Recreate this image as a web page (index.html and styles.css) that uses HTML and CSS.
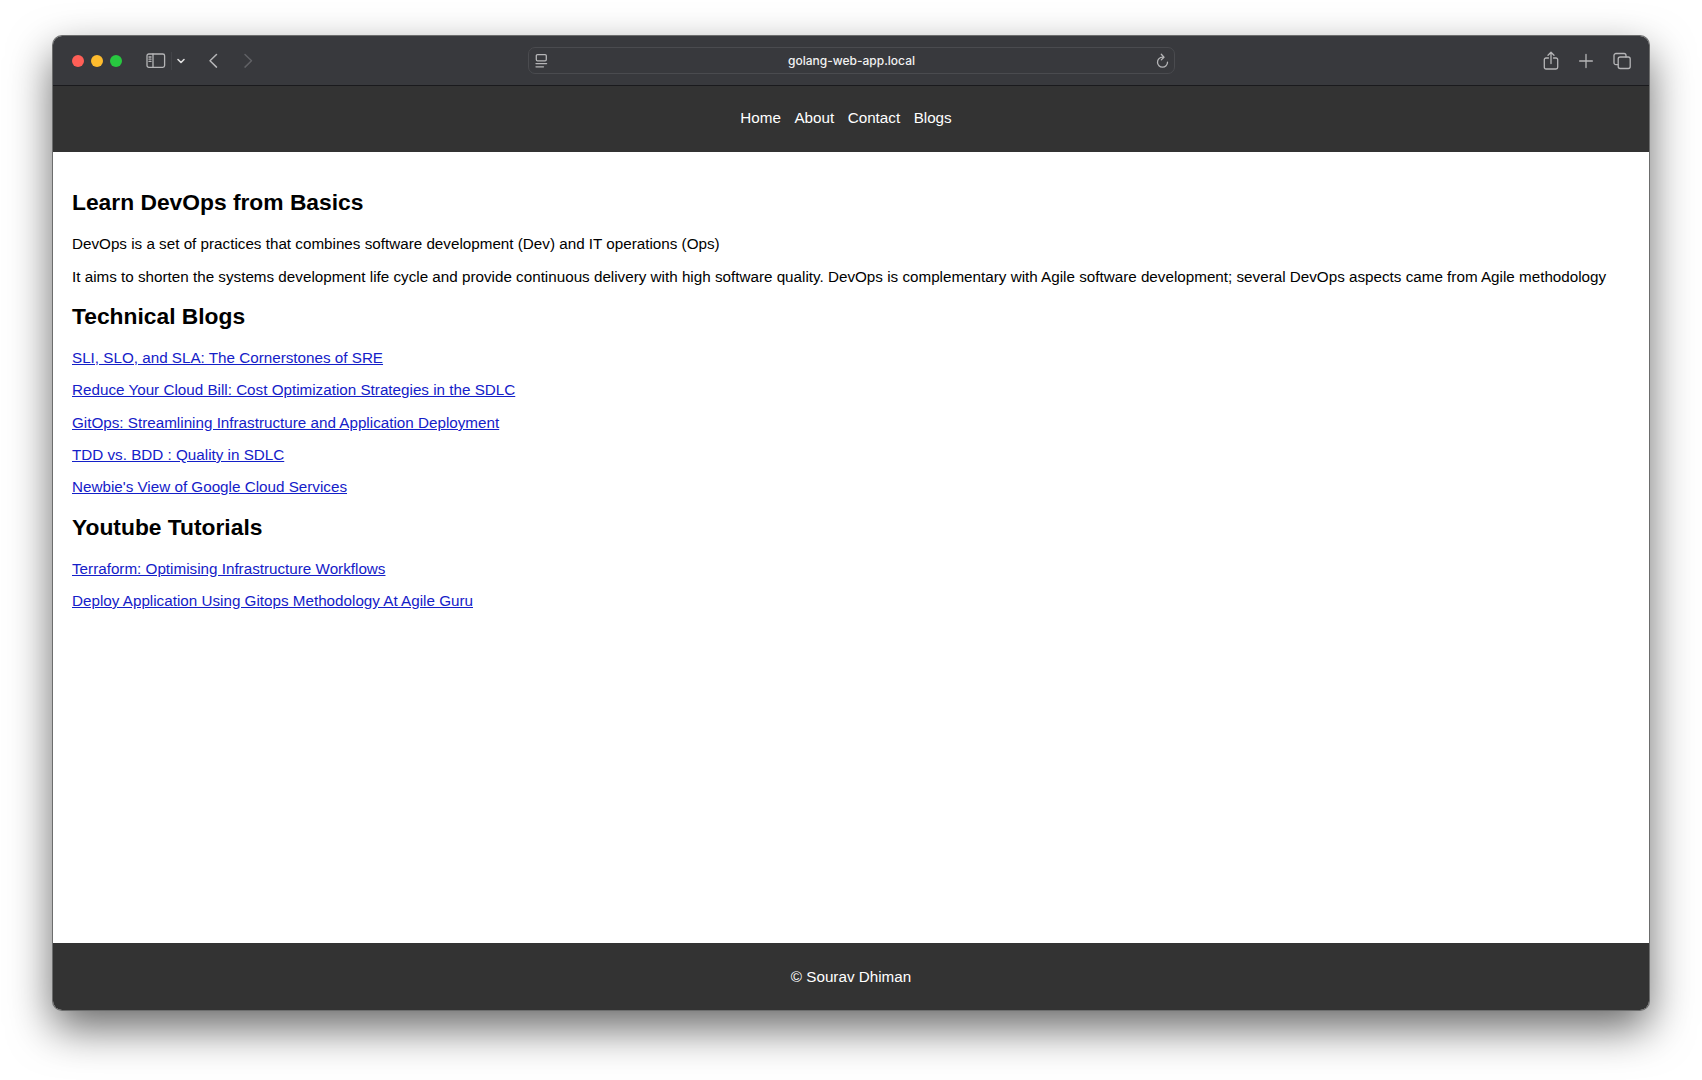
FILE: index.html
```html
<!DOCTYPE html>
<html lang="en">

<head>
    <meta charset="UTF-8">
    <meta name="viewport" content="width=device-width, initial-scale=1.0">
    <title>Learn DevOps from Basics</title>
    <link rel="stylesheet" href="styles.css">
</head>

<body>

    <div class="window">

        <div class="toolbar">
            <div class="tools-left">
                <span class="dot red"></span>
                <span class="dot yellow"></span>
                <span class="dot green"></span>
                <svg class="sidebar-icon" width="20" height="16" viewBox="0 0 20 16">
                    <rect x="1" y="1" width="17.6" height="13.4" rx="1.8" />
                    <path d="M7 1v13.4M3 4h2M3 6.2h2M3 8.4h2" />
                </svg>
                <span class="split"></span>
                <svg class="down-icon" width="10" height="8" viewBox="0 0 10 8">
                    <path d="M2 2.5l3 3 3-3" />
                </svg>
                <svg class="back-icon" width="10" height="16" viewBox="0 0 10 16">
                    <path d="M8.500 1.500L2 7.800l6.500 6.300" />
                </svg>
                <svg class="forward-icon" width="10" height="16" viewBox="0 0 10 16">
                    <path d="M2 1.500l6.500 6.300L2 14.100" />
                </svg>
            </div>

            <div class="address">
                <svg width="14" height="16" viewBox="0 0 14 16">
                    <rect x="1.300" y="1.600" width="10" height="6.200" rx="1.200" />
                    <path d="M1 10.600h10.600M1 13.800h7.500" />
                </svg>
                <span class="url">golang-web-app.local</span>
                <svg class="reload-icon" width="14" height="16" viewBox="0 0 14 16">
                    <path d="M8.500 4.200H7.500A5 5 0 1 0 12.500 9.200M6.300 1.300l2.700 2.900-2.700 2.700" />
                </svg>
            </div>

            <div class="tools-right">
                <svg width="16" height="20" viewBox="0 0 16 20">
                    <path d="M5.500 7H3a1.700 1.700 0 0 0-1.700 1.700v7.600A1.700 1.700 0 0 0 3 18h10a1.700 1.700 0 0 0 1.700-1.700V8.700A1.700 1.700 0 0 0 13 7h-2.500M8 12.500V1.500M5 4.300l3-3 3 3" />
                </svg>
                <svg class="plus-icon" width="14" height="20" viewBox="0 0 14 20">
                    <path d="M7 3.500v13M.6 10h12.800" />
                </svg>
                <svg width="18" height="20" viewBox="0 0 18 20">
                    <rect x="5.200" y="6" width="12" height="11.500" rx="2" />
                    <path d="M5 13.700H3a2 2 0 0 1-2-2V4.500a2 2 0 0 1 2-2h8a2 2 0 0 1 2 2V6" />
                </svg>
            </div>
        </div>

        <header class="header">
            <nav class="nav">
                <a href="#">Home</a>
                <a href="#">About</a>
                <a href="#">Contact</a>
                <a href="#">Blogs</a>
            </nav>
        </header>

        <main class="content">
            <h2>Learn DevOps from Basics</h2>
            <p>DevOps is a set of practices that combines software development (Dev) and IT operations (Ops)</p>
            <p>It aims to shorten the systems development life cycle and provide continuous delivery with high software quality. DevOps is complementary with Agile software development; several DevOps aspects came from Agile methodology</p>

            <h2>Technical Blogs</h2>
            <p><a href="#">SLI, SLO, and SLA: The Cornerstones of SRE</a></p>
            <p><a href="#">Reduce Your Cloud Bill: Cost Optimization Strategies in the SDLC</a></p>
            <p><a href="#">GitOps: Streamlining Infrastructure and Application Deployment</a></p>
            <p><a href="#">TDD vs. BDD : Quality in SDLC</a></p>
            <p><a href="#">Newbie's View of Google Cloud Services</a></p>

            <h2>Youtube Tutorials</h2>
            <p><a href="#">Terraform: Optimising Infrastructure Workflows</a></p>
            <p><a href="#">Deploy Application Using Gitops Methodology At Agile Guru</a></p>
        </main>

        <footer class="footer">&copy; Sourav Dhiman</footer>

    </div>

</body>

</html>
```
FILE: styles.css
```css
* {
    box-sizing: border-box;
}

body {
    margin: 0;
    height: 1080px;
    padding-top: 36px;
    overflow: hidden;
    background: white;
    font-family: "Liberation Sans", Arial, sans-serif;
    font-size: 15.22px;
    line-height: 17.1px;
}

.window {
    display: flex;
    flex-direction: column;
    width: 1596px;
    height: 973.5px;
    margin: 0 auto;
    border-radius: 9px;
    background: white;
    overflow: hidden;
    box-shadow: 0 0 0 1px #6c6d6d, 0 18px 44px rgba(0, 0, 0, 0.6);
}

/* browser toolbar */
.toolbar {
    display: grid;
    grid-template-columns: 1fr 647px 1fr;
    align-items: center;
    flex: none;
    height: 50px;
    background: #38393d;
    border-bottom: 1px solid #1a1a1d;
}

.toolbar svg {
    fill: none;
    stroke: #b5b5b7;
    stroke-width: 1.3;
    stroke-linecap: round;
    stroke-linejoin: round;
}

.tools-left,
.tools-right {
    display: flex;
    align-items: center;
}

.tools-left {
    padding-left: 18.5px;
}

.dot {
    width: 12px;
    height: 12px;
    margin-right: 7px;
    border-radius: 50%;
}

.red {
    background: #ff5f57;
}

.yellow {
    background: #febc2e;
}

.green {
    background: #28c840;
}

.sidebar-icon {
    margin-left: 17px;
}

.split {
    width: 1px;
    height: 18px;
    margin: 0 4px 0 5px;
    background: #434448;
}

.toolbar .down-icon {
    stroke: #dededf;
    stroke-width: 1.6;
}

.toolbar .back-icon {
    margin-left: 22px;
    stroke-width: 1.5;
}

.toolbar .forward-icon {
    margin-left: 25px;
    stroke: #606165;
    stroke-width: 1.5;
}

.address {
    display: flex;
    align-items: center;
    justify-content: space-between;
    height: 27px;
    padding: 0 5px 0 6px;
    border: 1px solid #4a4b4f;
    border-radius: 7px;
}

.url {
    color: #f2f2f2;
    font-family: Inter, sans-serif;
    font-size: 12px;
    font-weight: 500;
}

.tools-right {
    justify-content: flex-end;
    gap: 20px;
    padding-right: 18px;
}

/* page */
.header,
.footer {
    display: flex;
    align-items: center;
    justify-content: center;
    flex: none;
    height: 66.5px;
    background: #333;
    color: white;
}

.header {
    height: 66px;
    padding-bottom: 2px;
}

.nav {
    display: flex;
    gap: 13.5px;
    padding-right: 10px;
}

.nav a {
    color: white;
    text-decoration: none;
}

.content {
    flex: 1;
    padding: 19.3px 19px;
}

.content h2 {
    margin: 19.2px 0;
    font-size: 22.8px;
    line-height: 25.8px;
}

.content p {
    margin: 15.22px 0;
}

.content a {
    color: #1420c8;
}
```
